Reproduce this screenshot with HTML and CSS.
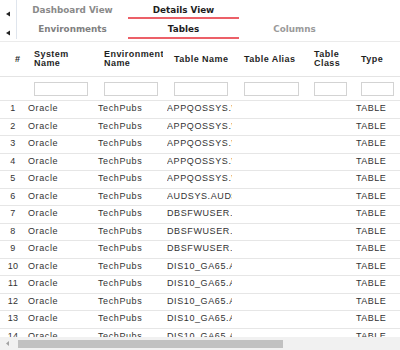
FILE: index.html
```html
<!DOCTYPE html>
<html lang="en">
<head>
<meta charset="utf-8">
<title>Details View - Tables</title>
<link rel="stylesheet" href="styles.css">
</head>
<body>
<div class="page">
  <div class="tabs">
    <div class="tab-side">
      <div class="side-cell r1"><svg width="16" height="19" viewBox="0 0 16 19"><polygon points="10,11.5 10,16.5 6,14" fill="#222"/></svg></div>
      <div class="side-cell r2"><svg width="16" height="20" viewBox="0 0 16 20"><polygon points="10,11.5 10,16.5 6,14" fill="#222"/></svg></div>
    </div>
    <div class="tab-main">
      <div class="tab-row r1">
        <div class="tab t-dash">Dashboard View</div>
        <div class="tab active">Details View</div>
      </div>
      <div class="tab-row r2">
        <div class="tab t-env">Environments</div>
        <div class="tab active">Tables</div>
        <div class="tab t-col">Columns</div>
      </div>
    </div>
  </div>

  <div class="grid-wrap">
    <div class="row head">
      <div class="hc hc-num">#</div>
      <div class="hc">System Name</div>
      <div class="hc hc-env">Environment Name</div>
      <div class="hc">Table Name</div>
      <div class="hc">Table Alias</div>
      <div class="hc">Table Class</div>
      <div class="hc">Type</div>
    </div>
    <div class="row filters">
      <div class="fc"></div>
      <div class="fc"><input class="flt w54" type="text"></div>
      <div class="fc"><input class="flt w54" type="text"></div>
      <div class="fc"><input class="flt w54" type="text"></div>
      <div class="fc"><input class="flt w55" type="text"></div>
      <div class="fc"><input class="flt w33" type="text"></div>
      <div class="fc"><input class="flt w33" type="text"></div>
    </div>
    <div class="body">
      <div class="row data"><div class="dc num">1</div><div class="dc sys">Oracle</div><div class="dc env">TechPubs</div><div class="dc tbl">APPQOSSYS.WLM_CLASSIFIER_PLAN</div><div class="dc"></div><div class="dc"></div><div class="dc type">TABLE</div></div>
      <div class="row data"><div class="dc num">2</div><div class="dc sys">Oracle</div><div class="dc env">TechPubs</div><div class="dc tbl">APPQOSSYS.WLM_FEATURE_USAGE</div><div class="dc"></div><div class="dc"></div><div class="dc type">TABLE</div></div>
      <div class="row data"><div class="dc num">3</div><div class="dc sys">Oracle</div><div class="dc env">TechPubs</div><div class="dc tbl">APPQOSSYS.WLM_METRICS_STREAM</div><div class="dc"></div><div class="dc"></div><div class="dc type">TABLE</div></div>
      <div class="row data"><div class="dc num">4</div><div class="dc sys">Oracle</div><div class="dc env">TechPubs</div><div class="dc tbl">APPQOSSYS.WLM_MPA_STREAM</div><div class="dc"></div><div class="dc"></div><div class="dc type">TABLE</div></div>
      <div class="row data"><div class="dc num">5</div><div class="dc sys">Oracle</div><div class="dc env">TechPubs</div><div class="dc tbl">APPQOSSYS.WLM_VIOLATION_STREAM</div><div class="dc"></div><div class="dc"></div><div class="dc type">TABLE</div></div>
      <div class="row data"><div class="dc num">6</div><div class="dc sys">Oracle</div><div class="dc env">TechPubs</div><div class="dc tbl">AUDSYS.AUD$UNIFIED</div><div class="dc"></div><div class="dc"></div><div class="dc type">TABLE</div></div>
      <div class="row data"><div class="dc num">7</div><div class="dc sys">Oracle</div><div class="dc env">TechPubs</div><div class="dc tbl">DBSFWUSER.DBSFW_ALLOW_SQL</div><div class="dc"></div><div class="dc"></div><div class="dc type">TABLE</div></div>
      <div class="row data"><div class="dc num">8</div><div class="dc sys">Oracle</div><div class="dc env">TechPubs</div><div class="dc tbl">DBSFWUSER.DBSFW_LOG</div><div class="dc"></div><div class="dc"></div><div class="dc type">TABLE</div></div>
      <div class="row data"><div class="dc num">9</div><div class="dc sys">Oracle</div><div class="dc env">TechPubs</div><div class="dc tbl">DBSFWUSER.DBSFW_RULES</div><div class="dc"></div><div class="dc"></div><div class="dc type">TABLE</div></div>
      <div class="row data"><div class="dc num">10</div><div class="dc sys">Oracle</div><div class="dc env">TechPubs</div><div class="dc tbl">DIS10_GA65.ACCOUNTS</div><div class="dc"></div><div class="dc"></div><div class="dc type">TABLE</div></div>
      <div class="row data"><div class="dc num">11</div><div class="dc sys">Oracle</div><div class="dc env">TechPubs</div><div class="dc tbl">DIS10_GA65.AGENTS</div><div class="dc"></div><div class="dc"></div><div class="dc type">TABLE</div></div>
      <div class="row data"><div class="dc num">12</div><div class="dc sys">Oracle</div><div class="dc env">TechPubs</div><div class="dc tbl">DIS10_GA65.ALERTS</div><div class="dc"></div><div class="dc"></div><div class="dc type">TABLE</div></div>
      <div class="row data"><div class="dc num">13</div><div class="dc sys">Oracle</div><div class="dc env">TechPubs</div><div class="dc tbl">DIS10_GA65.AREAS</div><div class="dc"></div><div class="dc"></div><div class="dc type">TABLE</div></div>
      <div class="row data"><div class="dc num">14</div><div class="dc sys">Oracle</div><div class="dc env">TechPubs</div><div class="dc tbl">DIS10_GA65.ASSETS</div><div class="dc"></div><div class="dc"></div><div class="dc type">TABLE</div></div>
      <div class="row data"><div class="dc num">15</div><div class="dc sys">Oracle</div><div class="dc env">TechPubs</div><div class="dc tbl">DIS10_GA65.BRANCHES</div><div class="dc"></div><div class="dc"></div><div class="dc type">TABLE</div></div>
    </div>
  </div>

  <div class="hscroll">
    <div class="hs-arrow"><svg width="18" height="13" viewBox="0 0 18 13"><polygon points="9,4 9,9 6,6.5" fill="#a3a3a3"/></svg></div>
    <div class="hs-thumb"></div>
  </div>
</div>
</body>
</html>
```

FILE: styles.css
```css
* { box-sizing: border-box; }

html, body {
  margin: 0;
  padding: 0;
  background: #ffffff;
}

.page {
  width: 400px;
  height: 350px;
  display: flex;
  flex-direction: column;
  overflow: hidden;
  font-family: "Liberation Sans", Arial, sans-serif;
}

/* ---------- tabs ---------- */
.tabs {
  display: flex;
  height: 42px;
  flex: 0 0 42px;
  border-bottom: 1px solid #ebebeb;
}

.tab-side {
  width: 17px;
  height: 39px;
  border-right: 1px solid #dfe5ed;
  display: flex;
  flex-direction: column;
}

.side-cell svg { display: block; }
.side-cell.r1 { height: 19px; }
.side-cell.r2 { height: 20px; }

.tab-main {
  display: flex;
  flex-direction: column;
}

.tab-row {
  display: flex;
}
.tab-row.r1 { height: 19px; }
.tab-row.r2 { height: 20px; }

.tab {
  width: 111px;
  height: 100%;
  padding-top: 5px;
  line-height: 11px;
  text-align: center;
  font-family: "DejaVu Sans", sans-serif;
  font-weight: bold;
  font-size: 8.8px;
  color: #8a8a8a;
  border-bottom: 2px solid transparent;
  white-space: nowrap;
}

.tab.t-env { color: #808080; }
.tab.t-col { color: #9a9a9a; }

.tab.active {
  color: #1e1e1e;
  border-bottom-color: #ec6068;
}

/* ---------- grid ---------- */
.grid-wrap {
  flex: 1 1 auto;
  overflow: hidden;
  display: flex;
  flex-direction: column;
}

.row {
  display: grid;
  grid-template-columns: 27px 70px 70px 70px 70px 47px 70px;
  width: 424px;
}

.row.head {
  height: 35px;
  flex: 0 0 35px;
  border-bottom: 1px solid #e4e4e4;
  align-items: center;
}

.hc {
  padding: 0 3px 0 7px;
  overflow: hidden;
  font-weight: bold;
  font-size: 9px;
  line-height: 9px;
  letter-spacing: 0.45px;
  color: #1f1f1f;
}

.hc.hc-num { padding-left: 15px; }
.hc.hc-env { padding-right: 0; margin-right: 4.5px; }

.row.filters {
  height: 23px;
  flex: 0 0 23px;
  align-items: center;
}

.fc {
  padding-left: 7px;
  display: flex;
}

.flt {
  display: block;
  height: 14px;
  margin: 0;
  padding: 0;
  border: 1px solid #d3d3d3;
  background: #ffffff;
  outline: none;
}
.flt.w54 { width: 54px; }
.flt.w55 { width: 55px; }
.flt.w33 { width: 33px; }

.body {
  flex: 1 1 auto;
  overflow: hidden;
}

.row.data {
  height: 17.5px;
  border-top: 1px solid #e6e6e6;
}

.dc {
  font-size: 9px;
  line-height: 15.5px;
  letter-spacing: 0.6px;
  color: #333333;
  white-space: nowrap;
  overflow: hidden;
}

.dc.num { text-align: center; padding-right: 1px; letter-spacing: 0.3px; }
.dc.sys { padding-left: 1px; }
.dc.env { padding-left: 1px; }
.dc.tbl { padding: 0; margin-right: 5px; text-overflow: clip; }
.dc.type { padding-left: 2px; letter-spacing: 0.5px; }

/* ---------- horizontal scrollbar ---------- */
.hscroll {
  flex: 0 0 13px;
  height: 13px;
  background: #f1f1f1;
  display: flex;
  align-items: center;
}

.hs-arrow { width: 18px; height: 13px; }
.hs-arrow svg { display: block; }

.hs-thumb {
  width: 265px;
  height: 8px;
  background: #c1c1c1;
}
```
